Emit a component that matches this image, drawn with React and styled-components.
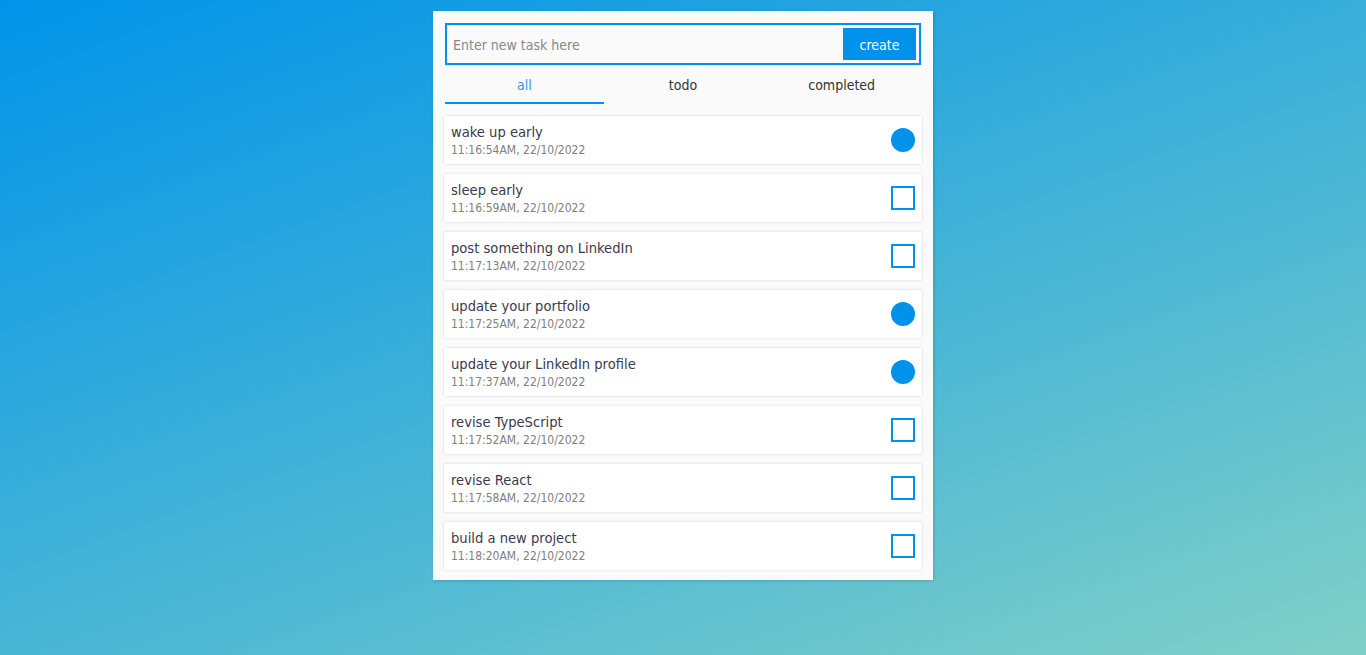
import React, { useState } from "react";
import styled, { createGlobalStyle } from "styled-components";

const Global = createGlobalStyle`
  html, body { margin: 0; padding: 0; height: 100%; }
  body {
    min-height: 100vh;
    background-image: linear-gradient(160deg, #0093E9 0%, #80D0C7 100%);
    background-attachment: fixed;
    font-family: "DejaVu Sans Condensed", "DejaVu Sans", sans-serif;
  }
  #root { display: flex; justify-content: center; padding-top: 11px; }
`;

const Card = styled.div`
  width: 500px;
  box-sizing: border-box;
  background: #fafafa;
  padding: 12px 11px 10px 12px;
  box-shadow: 1px 1px 3px rgba(0, 0, 0, 0.15);
`;

const Form = styled.form`
  display: flex;
  align-items: center;
  height: 42px;
  box-sizing: border-box;
  border: 2px solid #0091ea;
  padding: 3px;
  margin-right: 1px;
`;

const Input = styled.input`
  flex: 1;
  border: none;
  outline: none;
  background: transparent;
  font-family: inherit;
  font-size: 14px;
  color: #333;
  padding: 2px 3px 0;
  &::placeholder { color: #888; }
`;

const CreateButton = styled.button`
  width: 73px;
  height: 32px;
  border: none;
  background: #0091ea;
  color: #fff;
  font-family: inherit;
  font-size: 14px;
  padding: 2px 0 0;
  cursor: pointer;
`;

const Tabs = styled.div`
  display: grid;
  grid-template-columns: repeat(3, 1fr);
  height: 40px;
  margin-right: 1px;
`;

const Tab = styled.button`
  border: none;
  background: transparent;
  font-family: inherit;
  font-size: 14px;
  color: ${(p) => (p.$active ? "#3d94e6" : "#333")};
  border-bottom: 2px solid ${(p) => (p.$active ? "#0091ea" : "transparent")};
  padding: 3px 0 0;
  height: 39px;
  cursor: pointer;
`;

const List = styled.div`
  display: flex;
  flex-direction: column;
  gap: 10px;
  margin-top: 11px;
  margin-left: -1px;
`;

const Item = styled.div`
  display: flex;
  align-items: center;
  justify-content: space-between;
  height: 48px;
  box-sizing: border-box;
  background: #fff;
  padding: 0 7px;
  box-shadow: 0 0 2px rgba(0, 0, 0, 0.18);
`;

const Texts = styled.div`
  display: flex;
  flex-direction: column;
  gap: 3px;
`;

const Title = styled.div`
  font-size: 14.6px;
  line-height: 17px;
  color: #3a3a4a;
`;

const Time = styled.div`
  font-size: 12px;
  line-height: 14px;
  color: #808080;
`;

const Check = styled.button`
  width: 24px;
  height: 24px;
  box-sizing: border-box;
  padding: 0;
  border: 2px solid #0091ea;
  background: ${(p) => (p.$done ? "#0091ea" : "#fff")};
  border-radius: ${(p) => (p.$done ? "50%" : "0")};
  cursor: pointer;
`;

const initial = [
  { t: "wake up early", d: "11:16:54AM, 22/10/2022", done: true },
  { t: "sleep early", d: "11:16:59AM, 22/10/2022", done: false },
  { t: "post something on LinkedIn", d: "11:17:13AM, 22/10/2022", done: false },
  { t: "update your portfolio", d: "11:17:25AM, 22/10/2022", done: true },
  { t: "update your LinkedIn profile", d: "11:17:37AM, 22/10/2022", done: true },
  { t: "revise TypeScript", d: "11:17:52AM, 22/10/2022", done: false },
  { t: "revise React", d: "11:17:58AM, 22/10/2022", done: false },
  { t: "build a new project", d: "11:18:20AM, 22/10/2022", done: false },
];

export default function App() {
  const [tab, setTab] = useState("all");
  const [items, setItems] = useState(initial);
  const shown = items.filter((i) =>
    tab === "all" ? true : tab === "todo" ? !i.done : i.done
  );
  return (
    <>
      <Global />
      <Card>
        <Form onSubmit={(e) => e.preventDefault()}>
          <Input placeholder="Enter new task here" />
          <CreateButton type="submit">create</CreateButton>
        </Form>
        <Tabs>
          {["all", "todo", "completed"].map((k) => (
            <Tab key={k} $active={tab === k} onClick={() => setTab(k)}>
              {k}
            </Tab>
          ))}
        </Tabs>
        <List>
          {shown.map((i) => (
            <Item key={i.d}>
              <Texts>
                <Title>{i.t}</Title>
                <Time>{i.d}</Time>
              </Texts>
              <Check
                $done={i.done}
                onClick={() =>
                  setItems((arr) =>
                    arr.map((x) => (x === i ? { ...x, done: !x.done } : x))
                  )
                }
              />
            </Item>
          ))}
        </List>
      </Card>
    </>
  );
}
